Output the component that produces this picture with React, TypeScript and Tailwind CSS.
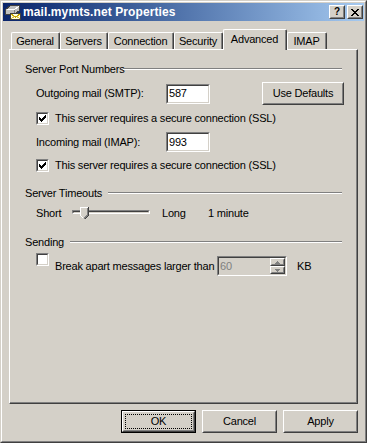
import React from 'react';

const raisedOuter = 'border border-t-white border-l-white border-r-[#404040] border-b-[#404040]';
const raisedInner = 'border border-t-[#d4d0c8] border-l-[#d4d0c8] border-r-[#808080] border-b-[#808080]';
const sunkenOuter = 'border border-t-[#808080] border-l-[#808080] border-r-white border-b-white';
const sunkenInner = 'border border-t-[#404040] border-l-[#404040] border-r-[#d4d0c8] border-b-[#d4d0c8]';

const MailIcon = () => (
  <svg width="16" height="16" viewBox="0 0 16 16" shapeRendering="crispEdges">
    {/* tray */}
    <path d="M0.5 5.5 L5.5 1.5 H14.5 V6.5 L9.5 10.5 H0.5 Z" fill="#c0c0c0" stroke="#404040" />
    <path d="M1.5 5.5 H9.5 L14 2" fill="none" stroke="#ffffff" />
    <path d="M9.5 5.5 V10" fill="none" stroke="#808080" />
    {/* envelope */}
    <rect x="5.5" y="9.5" width="10" height="6" fill="#ffffe0" stroke="#404040" />
    <path d="M6 10 L10.5 13 L15 10" fill="none" stroke="#c8a800" />
    <path d="M6 15 L9 12.5 M15 15 L12 12.5" fill="none" stroke="#e0c040" />
  </svg>
);

const TitleButton = ({ children }: { children: React.ReactNode }) => (
  <div className={`h-[14px] w-[16px] bg-[#d4d0c8] ${raisedOuter}`}>
    <div className={`flex h-full w-full items-center justify-center ${raisedInner}`}>{children}</div>
  </div>
);

const CheckMark = () => {
  // 7x7 pixel classic check
  const cols = [2, 3, 4, 3, 2, 1, 0];
  return (
    <svg width="7" height="7" viewBox="0 0 7 7" shapeRendering="crispEdges">
      {cols.map((top, i) => (
        <rect key={i} x={i} y={top} width="1" height="3" fill="#000" />
      ))}
    </svg>
  );
};

const Checkbox = ({ checked }: { checked?: boolean }) => (
  <div className={`h-[13px] w-[13px] shrink-0 ${sunkenOuter}`}>
    <div className={`flex h-full w-full items-center justify-center bg-white ${sunkenInner}`}>
      {checked && <CheckMark />}
    </div>
  </div>
);

const TextBox = ({ value }: { value: string }) => (
  <div className={`h-[20px] w-[44px] shrink-0 ${sunkenOuter}`}>
    <div className={`flex h-full w-full items-center bg-white pl-[1px] ${sunkenInner}`}>{value}</div>
  </div>
);

const Button = ({ label, className, isDefault }: { label: string; className: string; isDefault?: boolean }) => {
  const face = (
    <div className={`h-full w-full bg-[#d4d0c8] ${raisedOuter}`}>
      <div className={`flex h-full w-full ${raisedInner}`}>
        {isDefault ? (
          <div className="m-[1px] flex flex-1 items-center justify-center border border-dotted border-black">{label}</div>
        ) : (
          <div className="flex flex-1 items-center justify-center">{label}</div>
        )}
      </div>
    </div>
  );
  return (
    <div className={`shrink-0 ${className} ${isDefault ? 'border border-black' : ''}`}>{face}</div>
  );
};

const GroupHeader = ({ label, labelWidth, className }: { label: string; labelWidth: string; className: string }) => (
  <div className={`flex h-[14px] items-center ${className}`}>
    <span className={`shrink-0 whitespace-nowrap ${labelWidth}`}>{label}</span>
    <div className="mr-[2px] h-[2px] flex-1 border-t border-b border-t-[#808080] border-b-white" />
  </div>
);

const SliderThumb = () => (
  <svg width="9" height="13" viewBox="0 0 9 13" shapeRendering="crispEdges">
    <path d="M0 0 H8 V8 L4 12 L0 8 Z" fill="#d4d0c8" />
    <path d="M0.5 8.5 V0.5 H7.5" fill="none" stroke="#ffffff" />
    <path d="M7.5 0.5 V8 L4 11.5" fill="none" stroke="#808080" />
    <path d="M8.5 0 V8.5 L4.5 12.5" fill="none" stroke="#404040" />
    <path d="M0.5 8.5 L3.5 11.5" fill="none" stroke="#ffffff" />
  </svg>
);

const Slider = () => (
  <div className="relative h-[16px] w-[78px] shrink-0">
    <div className={`absolute left-0 right-0 top-[5px] h-[4px] ${sunkenOuter}`}>
      <div className={`h-full w-full ${sunkenInner}`} />
    </div>
    <div className="absolute left-[8px] top-[2px]">
      <SliderThumb />
    </div>
  </div>
);

const SpinArrow = ({ up }: { up?: boolean }) => (
  <svg width="5" height="3" viewBox="0 0 5 3" shapeRendering="crispEdges">
    {up ? (
      <>
        <rect x="2" y="0" width="1" height="1" fill="#808080" />
        <rect x="1" y="1" width="3" height="1" fill="#808080" />
        <rect x="0" y="2" width="5" height="1" fill="#808080" />
      </>
    ) : (
      <>
        <rect x="0" y="0" width="5" height="1" fill="#808080" />
        <rect x="1" y="1" width="3" height="1" fill="#808080" />
        <rect x="2" y="2" width="1" height="1" fill="#808080" />
      </>
    )}
  </svg>
);

const SpinButton = ({ up }: { up?: boolean }) => (
  <div className={`h-[8px] w-[15px] bg-[#d4d0c8] ${raisedOuter}`}>
    <div className={`flex h-full w-full items-center justify-center ${raisedInner}`}>
      <SpinArrow up={up} />
    </div>
  </div>
);

const SpinBox = () => (
  <div className={`h-[20px] w-[70px] shrink-0 ${sunkenOuter}`}>
    <div className={`flex h-full w-full items-center bg-[#d4d0c8] ${sunkenInner}`}>
      <span className="pl-[1px] text-[#808080]">60</span>
      <div className="ml-auto flex h-full flex-col">
        <SpinButton up />
        <SpinButton />
      </div>
    </div>
  </div>
);

const tabs = [
  { label: 'General', w: 'w-[49px]' },
  { label: 'Servers', w: 'w-[48px]' },
  { label: 'Connection', w: 'w-[66px]' },
  { label: 'Security', w: 'w-[49px]' },
  { label: 'Advanced', w: 'w-[64px]', active: true },
  { label: 'IMAP', w: 'w-[40px]' },
];

const App = () => {
  return (
    <div className="h-[443px] w-[367px] whitespace-nowrap bg-[#d4d0c8] text-[11px] leading-none tracking-[-0.2px] text-black font-['Liberation_Sans',Arial,sans-serif] border border-t-[#d4d0c8] border-l-[#d4d0c8] border-r-[#404040] border-b-[#404040]">
      <div className="flex h-full flex-col border border-t-white border-l-white border-r-[#808080] border-b-[#808080] p-[1px]">
        {/* Title bar */}
        <div className="flex h-[18px] shrink-0 items-center bg-linear-to-r from-[#0a246a] to-[#a6caf0] pl-[2px] pr-[1px]">
          <MailIcon />
          <span className="ml-[2px] text-[12px] font-bold tracking-[0.1px] text-white">mail.mymts.net Properties</span>
          <div className="ml-auto flex gap-[2px]">
            <TitleButton>
              <span className="text-[10px] font-bold leading-none tracking-normal">?</span>
            </TitleButton>
            <TitleButton>
              <svg width="8" height="7" viewBox="0 0 8 7" shapeRendering="crispEdges">
                <path d="M0 0 L7 7 M1 0 L8 7 M7 0 L0 7 M8 0 L1 7" stroke="#000" strokeWidth="1" />
              </svg>
            </TitleButton>
          </div>
        </div>

        {/* Body */}
        <div className="flex flex-1 flex-col px-[6px] pt-[8px]">
          {/* Tabs */}
          <div className="flex h-[20px] items-end pl-[2px]">
            {tabs.map((t) =>
              t.active ? (
                <div
                  key={t.label}
                  className={`relative z-10 -mb-[1px] h-[21px] ${t.w} rounded-t-[2px] border-t border-l border-r border-t-white border-l-white border-r-[#404040] bg-[#d4d0c8]`}
                >
                  <div className="flex h-full items-center justify-center border-r border-r-[#808080] pb-[2px]">{t.label}</div>
                </div>
              ) : (
                <div
                  key={t.label}
                  className={`h-[17px] ${t.w} rounded-t-[2px] border-t border-l border-r border-t-white border-l-white border-r-[#404040]`}
                >
                  <div className="flex h-full items-center justify-center border-r border-r-[#808080]">{t.label}</div>
                </div>
              )
            )}
          </div>

          {/* Panel */}
          <div className="h-[355px] shrink-0 border border-t-white border-l-white border-r-[#404040] border-b-[#404040]">
            <div className="flex h-full flex-col border-r border-b border-r-[#808080] border-b-[#808080] pl-[15px] pr-[12px]">
              <GroupHeader label="Server Port Numbers" labelWidth="w-[98px]" className="mt-[12px]" />

              <div className="ml-[11px] mt-[6px] flex h-[23px] items-center">
                <span className="w-[130px] shrink-0">Outgoing mail (SMTP):</span>
                <TextBox value="587" />
                <Button label="Use Defaults" className="ml-auto h-[23px] w-[82px]" />
              </div>

              <div className="ml-[11px] mt-[7px] flex h-[13px] items-center">
                <Checkbox checked />
                <span className="ml-[6px]">This server requires a secure connection (SSL)</span>
              </div>

              <div className="ml-[11px] mt-[7px] flex h-[20px] items-center">
                <span className="w-[130px] shrink-0">Incoming mail (IMAP):</span>
                <TextBox value="993" />
              </div>

              <div className="ml-[11px] mt-[7px] flex h-[13px] items-center">
                <Checkbox checked />
                <span className="ml-[6px]">This server requires a secure connection (SSL)</span>
              </div>

              <GroupHeader label="Server Timeouts" labelWidth="w-[83px]" className="mt-[14px]" />

              <div className="ml-[11px] mt-[5px] flex h-[16px] items-center">
                <span className="w-[36px] shrink-0">Short</span>
                <Slider />
                <span className="ml-[12px] w-[46px] shrink-0">Long</span>
                <span>1 minute</span>
              </div>

              <GroupHeader label="Sending" labelWidth="w-[45px]" className="mt-[14px]" />

              <div className="ml-[11px] mt-[4px] flex">
                <Checkbox />
                <div className="ml-[6px] mt-[3px] flex h-[20px] items-center">
                  <span className="w-[162px] shrink-0">Break apart messages larger than</span>
                  <SpinBox />
                  <span className="ml-[10px]">KB</span>
                </div>
              </div>
            </div>
          </div>

          {/* Dialog buttons */}
          <div className="mt-[6px] flex justify-end gap-[6px]">
            <Button label="OK" className="h-[23px] w-[75px]" isDefault />
            <Button label="Cancel" className="h-[23px] w-[75px]" />
            <Button label="Apply" className="h-[23px] w-[75px]" />
          </div>
        </div>
      </div>
    </div>
  );
};

export default App;
